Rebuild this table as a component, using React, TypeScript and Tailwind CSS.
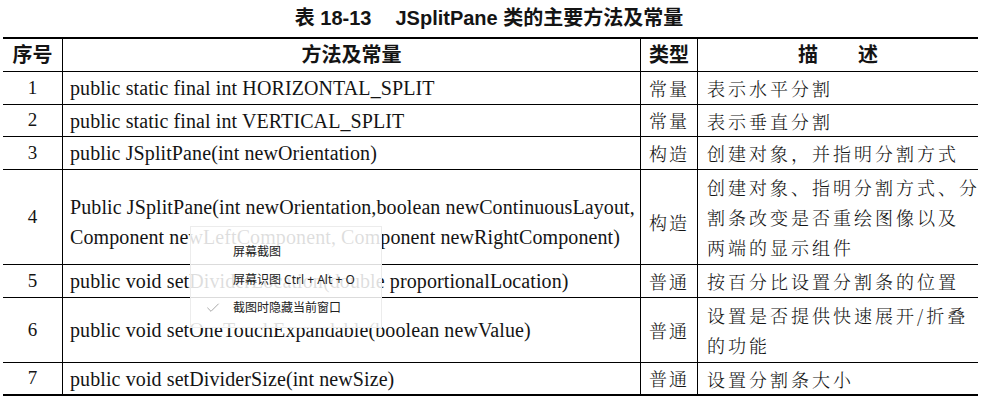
import { Check } from "lucide-react";

type Row = {
  no: string;
  method: string[];
  kind: string;
  desc: string[];
  h: string;
  pad?: string;
};

const rows: Row[] = [
  { no: "1", method: ["public static final int HORIZONTAL_SPLIT"], kind: "常量", desc: ["表示水平分割"], h: "h-[33px]" },
  { no: "2", method: ["public static final int VERTICAL_SPLIT"], kind: "常量", desc: ["表示垂直分割"], h: "h-[32px]" },
  { no: "3", method: ["public JSplitPane(int newOrientation)"], kind: "构造", desc: ["创建对象，并指明分割方式"], h: "h-[33px]" },
  {
    no: "4",
    method: [
      "Public JSplitPane(int newOrientation,boolean newContinuousLayout,",
      "Component newLeftComponent, Component newRightComponent)",
    ],
    kind: "构造",
    desc: ["创建对象、指明分割方式、分", "割条改变是否重绘图像以及", "两端的显示组件"],
    h: "h-[95px]",
    pad: "pt-[10px]",
  },
  { no: "5", method: ["public void setDividerLocation(double proportionalLocation)"], kind: "普通", desc: ["按百分比设置分割条的位置"], h: "h-[33px]" },
  {
    no: "6",
    method: ["public void setOneTouchExpandable(boolean newValue)"],
    kind: "普通",
    desc: ["设置是否提供快速展开/折叠", "的功能"],
    h: "h-[65px]",
  },
  { no: "7", method: ["public void setDividerSize(int newSize)"], kind: "普通", desc: ["设置分割条大小"], h: "h-[33px]" },
];

const cols = "grid grid-cols-[59px_578px_57px_281px]";
const latin = "font-['Liberation_Serif','Noto_Sans_CJK_SC',serif]";
const cjk = "font-['Noto_Serif_CJK_SC','Noto_Sans_CJK_SC',serif] font-light";
const hei = "font-['Liberation_Sans','Noto_Sans_CJK_SC',sans-serif] font-bold";

const App = () => {
  return (
    <div className="relative w-[992px] h-[404px] bg-white text-[#141414] overflow-hidden">
      {/* 表题 */}
      <div className={`h-[37px] flex items-center justify-center pr-[14px] pb-[2px] text-[20px] ${hei}`}>
        <span>表 18-13</span>
        <span className="ml-[24px]">JSplitPane 类的主要方法及常量</span>
      </div>

      <div className="ml-[3px] w-[975px] border-t-2 border-black">
        {/* 表头 */}
        <div className={`${cols} h-[33px] border-b border-black text-[20px] ${hei}`}>
          <div className="flex items-center justify-center">序号</div>
          <div className="flex items-center justify-center border-l border-black">方法及常量</div>
          <div className="flex items-center justify-center border-l border-black">类型</div>
          <div className="flex items-center justify-center border-l border-black">描　　述</div>
        </div>

        {rows.map((r, i) => (
          <div
            key={r.no}
            className={`${cols} ${r.h} ${i === rows.length - 1 ? "border-b-2" : "border-b"} border-black`}
          >
            <div className={`flex items-center justify-center text-[19px] ${latin}`}>{r.no}</div>
            <div className={`flex flex-col justify-center pl-[7px] border-l border-black text-[20px] leading-[30px] tracking-[0.1px] whitespace-nowrap ${r.pad ?? ""} ${latin}`}>
              {r.method.map((m) => (
                <span key={m}>{m}</span>
              ))}
            </div>
            <div className={`flex items-center justify-center border-l border-black text-[18px] tracking-[2px] ${r.pad ?? ""} ${cjk}`}>
              {r.kind}
            </div>
            <div className={`flex flex-col justify-center pl-[9px] border-l border-black text-[18px] leading-[30px] tracking-[3px] whitespace-nowrap ${cjk}`}>
              {r.desc.map((d) => (
                <span key={d}>{d}</span>
              ))}
            </div>
          </div>
        ))}
      </div>

      {/* 右键菜单 */}
      <div className="absolute left-[190px] top-[226px] w-[192px] h-[102px] bg-white/[0.86] border border-[#ececec] pt-[11px] font-['Noto_Sans','Noto_Sans_CJK_SC',sans-serif] text-[12px] text-[#222]">
        <div className="h-[28px] flex items-center pl-[42px]">屏幕截图</div>
        <div className="h-[28px] flex items-center pl-[42px]">屏幕识图 Ctrl + Alt + O</div>
        <div className="h-[28px] flex items-center">
          <Check className="w-[16px] h-[16px] ml-[14px] mr-[12px] text-[#9a9a9a]" strokeWidth={1.3} />
          <span>截图时隐藏当前窗口</span>
        </div>
      </div>
    </div>
  );
};

export default App;
